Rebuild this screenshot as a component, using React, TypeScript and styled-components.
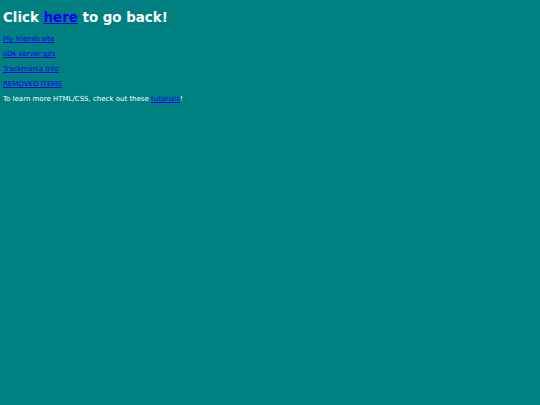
import { FC } from "react";
import styled, { createGlobalStyle } from "styled-components";

const GlobalStyle = createGlobalStyle`
  html, body {
    margin: 0;
    padding: 0;
    background: #008080;
  }
  body {
    padding: 3px;
    font-family: "DejaVu Sans", Verdana, sans-serif;
    color: #ffffff;
  }
`;

const Page = styled.div`
  display: flex;
  flex-direction: column;
`;

const Heading = styled.h1`
  margin: 6px 0 8px;
  font-size: 13.4px;
  font-weight: bold;
  line-height: 18px;
`;

const Line = styled.p`
  margin: 0 0 6px;
  font-size: 7px;
  line-height: 9px;
`;

const A = styled.a`
  color: #0000ee;
  text-decoration: underline;
`;

const links = ["My friends site", "iiDk server gifs", "Trackmania Info", "REMOVED ITEMS"];

const App: FC = () => {
  return (
    <>
      <GlobalStyle />
      <Page>
        <Heading>
          Click <A href="#">here</A> to go back!
        </Heading>
        {links.map((label) => (
          <Line key={label}>
            <A href="#">{label}</A>
          </Line>
        ))}
        <Line>
          To learn more HTML/CSS, check out these <A href="#">tutorials</A>!
        </Line>
      </Page>
    </>
  );
};

export default App;
